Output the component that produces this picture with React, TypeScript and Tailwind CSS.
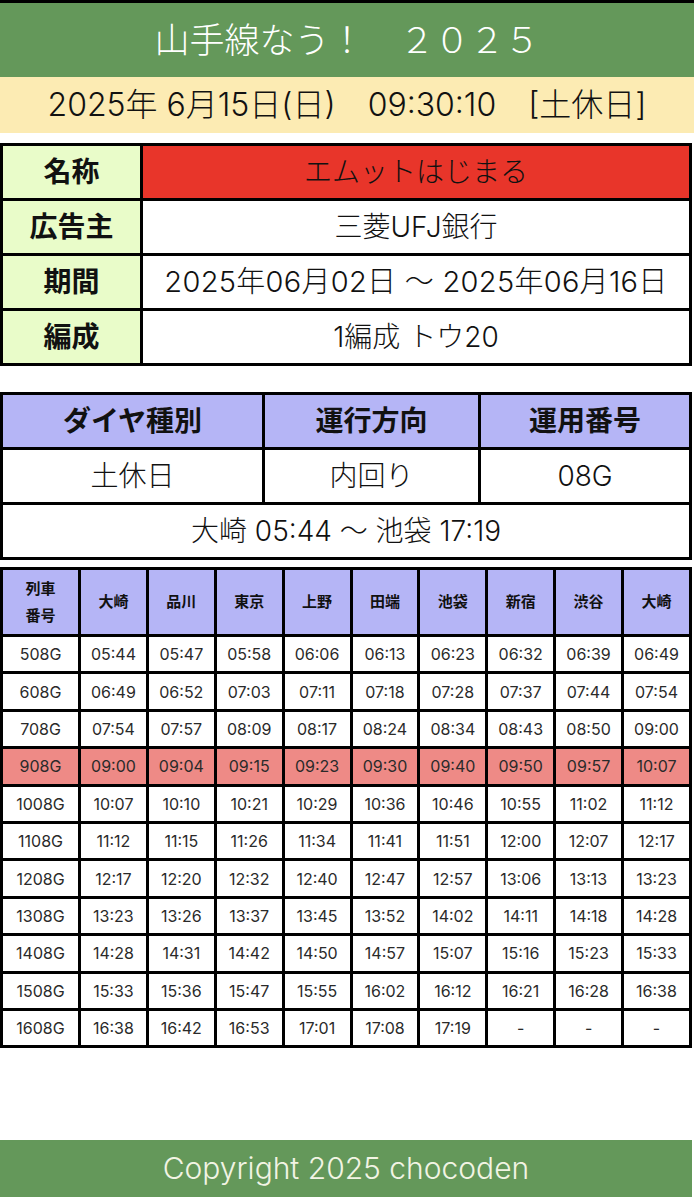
const stations = ['大崎', '品川', '東京', '上野', '田端', '池袋', '新宿', '渋谷', '大崎']

const rows: [string, string[]][] = [
  ['508G', ['05:44', '05:47', '05:58', '06:06', '06:13', '06:23', '06:32', '06:39', '06:49']],
  ['608G', ['06:49', '06:52', '07:03', '07:11', '07:18', '07:28', '07:37', '07:44', '07:54']],
  ['708G', ['07:54', '07:57', '08:09', '08:17', '08:24', '08:34', '08:43', '08:50', '09:00']],
  ['908G', ['09:00', '09:04', '09:15', '09:23', '09:30', '09:40', '09:50', '09:57', '10:07']],
  ['1008G', ['10:07', '10:10', '10:21', '10:29', '10:36', '10:46', '10:55', '11:02', '11:12']],
  ['1108G', ['11:12', '11:15', '11:26', '11:34', '11:41', '11:51', '12:00', '12:07', '12:17']],
  ['1208G', ['12:17', '12:20', '12:32', '12:40', '12:47', '12:57', '13:06', '13:13', '13:23']],
  ['1308G', ['13:23', '13:26', '13:37', '13:45', '13:52', '14:02', '14:11', '14:18', '14:28']],
  ['1408G', ['14:28', '14:31', '14:42', '14:50', '14:57', '15:07', '15:16', '15:23', '15:33']],
  ['1508G', ['15:33', '15:36', '15:47', '15:55', '16:02', '16:12', '16:21', '16:28', '16:38']],
  ['1608G', ['16:38', '16:42', '16:53', '17:01', '17:08', '17:19', '-', '-', '-']],
]

const info = [
  { label: '名称', value: 'エムットはじまる', cls: 'bg-[#e8352a] text-[28px]' },
  { label: '広告主', value: '三菱UFJ銀行', cls: 'bg-white text-[28px]' },
  { label: '期間', value: '2025年06月02日 〜 2025年06月16日', cls: 'bg-white text-[29px] tracking-[0.01em]' },
  { label: '編成', value: '1編成 トウ20', cls: 'bg-white text-[28px]' },
]

export default function App() {
  return (
    <div className="w-[694px] h-[1200px] bg-white text-[#111] font-['Inter','Noto_Sans_CJK_JP',sans-serif] flex flex-col">
      <div className="h-[3px] bg-black" />
      {/* Title */}
      <div className="h-[74px] bg-[#64985a] flex items-center justify-center text-white text-[35px] font-light">
        山手線なう！　２０２５
      </div>
      <div className="h-[56px] bg-[#fcebb3] flex items-center justify-center text-[32px] font-light">
        2025年 6月15日(日)　09:30:10　[土休日]
      </div>

      {/* Ad info */}
      <table className="mt-[10px] w-[692px] border-collapse table-fixed">
        <colgroup>
          <col className="w-[140px]" />
          <col />
        </colgroup>
        <tbody>
          {info.map((r) => (
            <tr key={r.label} className="h-[55px]">
              <td className="border-[3px] border-black bg-[#e9fcc9] text-center text-[28px] font-bold">{r.label}</td>
              <td className={`border-[3px] border-black text-center font-light ${r.cls}`}>{r.value}</td>
            </tr>
          ))}
        </tbody>
      </table>

      {/* Operation info */}
      <table className="mt-[26px] w-[692px] border-collapse table-fixed">
        <colgroup>
          <col className="w-[262px]" />
          <col className="w-[216px]" />
          <col />
        </colgroup>
        <tbody>
          <tr className="h-[55px] bg-[#b5b5f6]">
            <td className="border-[3px] border-black text-center text-[28px] font-bold">ダイヤ種別</td>
            <td className="border-[3px] border-black text-center text-[28px] font-bold">運行方向</td>
            <td className="border-[3px] border-black text-center text-[28px] font-bold">運用番号</td>
          </tr>
          <tr className="h-[55px]">
            <td className="border-[3px] border-black text-center text-[28px] font-light">土休日</td>
            <td className="border-[3px] border-black text-center text-[28px] font-light">内回り</td>
            <td className="border-[3px] border-black text-center text-[28px] font-light">08G</td>
          </tr>
          <tr className="h-[55px]">
            <td colSpan={3} className="border-[3px] border-black text-center text-[28px] font-light">
              大崎 05:44 〜 池袋 17:19
            </td>
          </tr>
        </tbody>
      </table>

      {/* Timetable */}
      <table className="mt-[7px] w-[692px] border-collapse table-fixed">
        <colgroup>
          <col className="w-[78px]" />
          {stations.map((_, i) => (
            <col key={i} />
          ))}
        </colgroup>
        <thead>
          <tr className="h-[67px] bg-[#b5b5f6]">
            <th className="border-[3px] border-black text-[15px] font-bold leading-[27px]">
              列車
              <br />
              番号
            </th>
            {stations.map((s, i) => (
              <th key={i} className="border-[3px] border-black text-[15px] font-bold">{s}</th>
            ))}
          </tr>
        </thead>
        <tbody>
          {rows.map(([no, times]) => {
            const hl = no === '908G'
            return (
              <tr key={no} className={`h-[37.4px] ${hl ? 'bg-[#ee8a86]' : 'bg-white'}`}>
                <td className="border-[3px] border-black text-center text-[16px] text-[#2a2a2a]">{no}</td>
                {times.map((t, i) => (
                  <td key={i} className="border-[3px] border-black text-center text-[16px] text-[#2a2a2a]">{t}</td>
                ))}
              </tr>
            )
          })}
        </tbody>
      </table>

      <div className="flex-1" />
      <div className="mb-[3px] h-[57px] w-[692px] bg-[#64985a] flex items-center justify-center text-[#f2f4e4] text-[30px] font-light">
        Copyright 2025 chocoden
      </div>
    </div>
  )
}
